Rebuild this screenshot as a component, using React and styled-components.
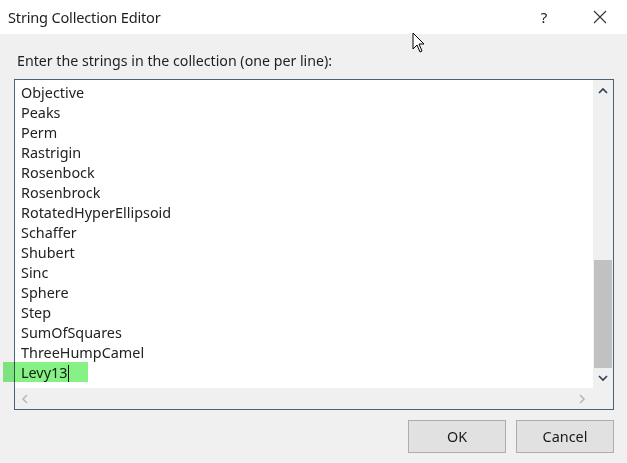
import React from 'react';
import styled, { createGlobalStyle } from 'styled-components';

const GlobalStyle = createGlobalStyle`
  html, body {
    margin: 0;
    padding: 0;
    background: #f0f0f0;
  }
  body {
    font-family: "Noto Sans", "Open Sans", "Liberation Sans", sans-serif;
    color: #1a1a1a;
  }
`;

const Window = styled.div`
  position: relative;
  width: 627px;
  height: 463px;
  display: flex;
  flex-direction: column;
  background: #f0f0f0;
  overflow: hidden;
`;

const TitleBar = styled.div`
  height: 34px;
  background: #ffffff;
  display: flex;
  align-items: center;
  padding: 0 4px 0 8px;
  font-size: 14.6px;
  letter-spacing: -0.2px;
  color: #1f1f1f;
`;

const TitleText = styled.div`
  flex: 1;
  margin-top: -1px;
`;

const TitleButton = styled.div`
  width: ${(p) => p.$w}px;
  margin-right: ${(p) => p.$mr || 0}px;
  display: flex;
  justify-content: center;
  align-items: center;
  font-size: 15px;
  color: #222;
`;

const Body = styled.div`
  flex: 1;
  display: flex;
  flex-direction: column;
  padding: 16px 13px 0 14px;
`;

const Label = styled.div`
  font-size: 14.2px;
  padding-left: 3px;
  height: 29px;
  line-height: 22px;
  color: #1f1f1f;
`;

const TextBox = styled.div`
  height: 331px;
  box-sizing: border-box;
  border: 1px solid #4a6179;
  display: grid;
  grid-template-columns: 1fr 20px;
  grid-template-rows: 1fr 21px;
  background: #f0f0f0;
`;

const Lines = styled.div`
  background: #ffffff;
  padding: 3px 0 0 6px;
  overflow: hidden;
`;

const Line = styled.div`
  height: 20px;
  line-height: 20px;
  font-size: 14.4px;
  color: #222;
  display: flex;
  align-items: center;
`;

const Caret = styled.span`
  display: inline-block;
  width: 1px;
  height: 17px;
  background: #000;
  margin-left: 1px;
`;

const VScroll = styled.div`
  display: flex;
  flex-direction: column;
  background: #f0f0f0;
`;

const Arrow = styled.div`
  height: ${(p) => p.$h}px;
  display: flex;
  align-items: center;
  justify-content: center;
  flex-shrink: 0;
`;

const Track = styled.div`
  flex: 1;
  display: flex;
  flex-direction: column;
  justify-content: flex-end;
  padding: 0 1px;
`;

const Thumb = styled.div`
  height: 108px;
  background: #c1c1c1;
`;

const HScroll = styled.div`
  grid-column: 1 / 3;
  display: flex;
  justify-content: space-between;
  align-items: center;
  padding: 0 27px 0 6px;
`;

const Highlight = styled.div`
  position: absolute;
  left: 3px;
  top: 362px;
  width: 85px;
  height: 20px;
  background: #86f286;
  mix-blend-mode: multiply;
`;

const Footer = styled.div`
  display: flex;
  justify-content: flex-end;
  gap: 10px;
  padding-top: 10px;
`;

const Button = styled.button`
  width: 98px;
  height: 33px;
  box-sizing: border-box;
  border: 1px solid #adadad;
  background: #e1e1e1;
  font-family: inherit;
  font-size: 14.4px;
  color: #1a1a1a;
  padding: 0;
`;

const Cursor = styled.svg`
  position: absolute;
  left: 412px;
  top: 32px;
`;

const items = [
  'Objective',
  'Peaks',
  'Perm',
  'Rastrigin',
  'Rosenbock',
  'Rosenbrock',
  'RotatedHyperEllipsoid',
  'Schaffer',
  'Shubert',
  'Sinc',
  'Sphere',
  'Step',
  'SumOfSquares',
  'ThreeHumpCamel',
];

function Chevron({ dir, color = '#2b3e52' }) {
  const paths = {
    up: 'M1 6 L5 2 L9 6',
    down: 'M1 2 L5 6 L9 2',
    left: 'M6 1 L2 5 L6 9',
    right: 'M2 1 L6 5 L2 9',
  };
  const vertical = dir === 'up' || dir === 'down';
  return (
    <svg width={vertical ? 10 : 8} height={vertical ? 8 : 10} viewBox={vertical ? '0 0 10 8' : '0 0 8 10'}>
      <path d={paths[dir]} fill="none" stroke={color} strokeWidth="1.6" />
    </svg>
  );
}

export default function App() {
  return (
    <Window>
      <GlobalStyle />
      <TitleBar>
        <TitleText>String Collection Editor</TitleText>
        <TitleButton $w={30} $mr={18}>?</TitleButton>
        <TitleButton $w={46}>
          <svg width="14" height="14" viewBox="0 0 14 14">
            <path d="M1 1 L13 13 M13 1 L1 13" stroke="#333" strokeWidth="1.1" />
          </svg>
        </TitleButton>
      </TitleBar>
      <Body>
        <Label>Enter the strings in the collection (one per line):</Label>
        <TextBox>
          <Lines>
            {items.map((s) => (
              <Line key={s}>{s}</Line>
            ))}
            <Line>
              Levy13
              <Caret />
            </Line>
          </Lines>
          <VScroll>
            <Arrow $h={22}>
              <Chevron dir="up" />
            </Arrow>
            <Track>
              <Thumb />
            </Track>
            <Arrow $h={20}>
              <Chevron dir="down" />
            </Arrow>
          </VScroll>
          <HScroll>
            <Chevron dir="left" color="#b8b8b8" />
            <Chevron dir="right" color="#b8b8b8" />
          </HScroll>
        </TextBox>
        <Footer>
          <Button>OK</Button>
          <Button>Cancel</Button>
        </Footer>
      </Body>
      <Highlight />
      <Cursor width="14" height="22" viewBox="0 0 14 22">
        <path d="M1 1 L1 17 L5 13 L8 20 L10 19 L7 12 L12 12 Z" fill="#fff" stroke="#000" strokeWidth="1" />
      </Cursor>
    </Window>
  );
}
